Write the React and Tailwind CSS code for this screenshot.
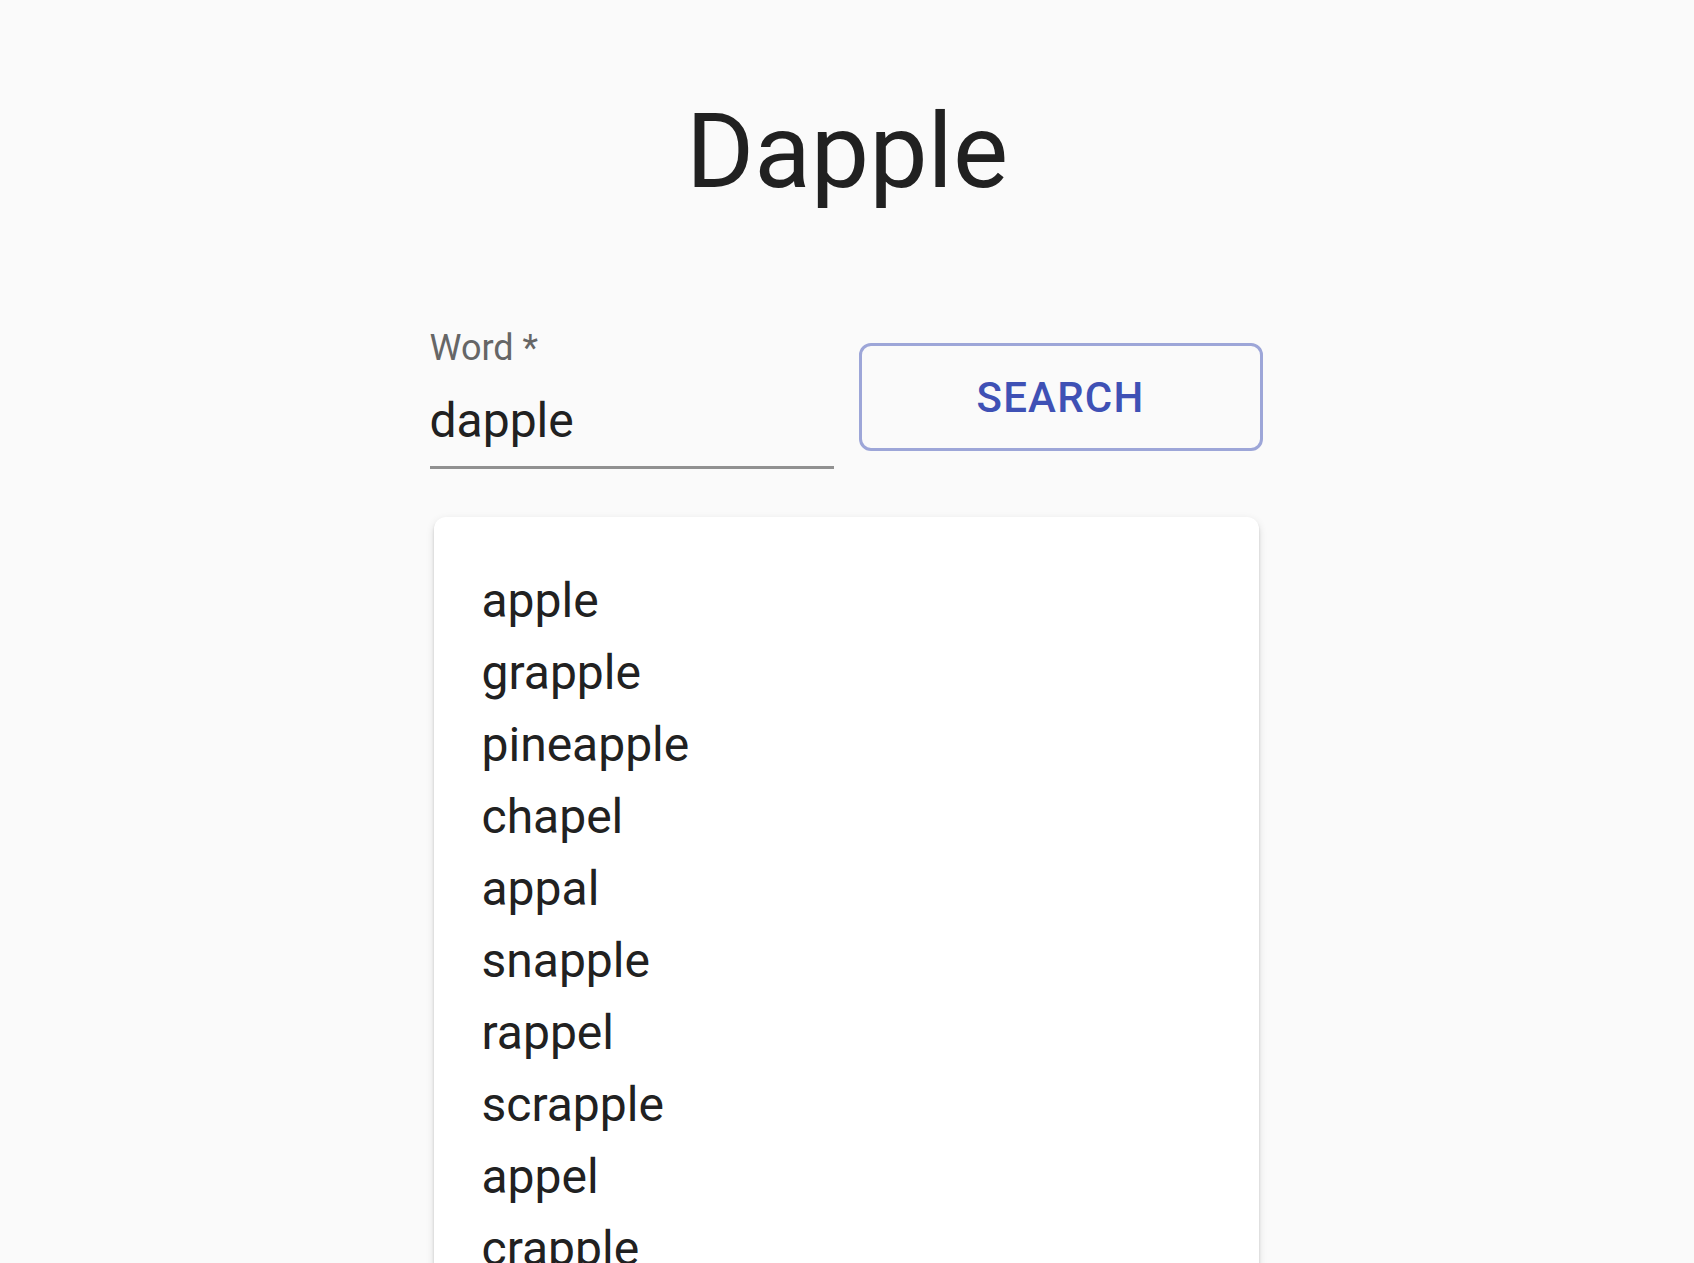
import React, { useState } from "react";

const words = [
  "apple",
  "grapple",
  "pineapple",
  "chapel",
  "appal",
  "snapple",
  "rappel",
  "scrapple",
  "appel",
  "crapple",
  "dapple",
  "chappell",
];

export default function App() {
  const [word, setWord] = useState("dapple");

  return (
    <div className="h-screen overflow-hidden bg-[#fafafa] font-['Roboto',sans-serif] text-[#212121]">
      {/* Title */}
      <h1 className="pt-[100px] text-center text-[104px] leading-[104px] font-normal">
        Dapple
      </h1>

      <div className="mx-auto mt-[126px] w-[833px] -translate-x-[1px]">
        {/* Search form */}
        <form
          onSubmit={(e) => e.preventDefault()}
          className="flex items-start gap-[25px]"
        >
          <label className="flex w-[404px] flex-col">
            <span className="text-[36px] leading-[36px] text-[#666666]">Word *</span>
            <input
              value={word}
              onChange={(e) => setWord(e.target.value)}
              className="mt-[27px] box-content h-[56px] border-b-[3px] border-[#919191] bg-transparent pb-[17px] text-[48px] leading-[56px] text-[#212121] outline-none"
            />
          </label>
          <button
            type="submit"
            className="mt-[13px] flex h-[108px] w-[404px] items-center justify-center rounded-[12px] border-[3px] border-[#9da6d8] text-[42px] font-medium uppercase tracking-[1.2px] text-[#3f51b5]"
          >
            Search
          </button>
        </form>

        {/* Results */}
        <div className="mx-[4px] mt-[48px] rounded-[12px] bg-white px-[48px] pt-[48px] pb-[48px] shadow-[0_6px_3px_-3px_rgba(0,0,0,0.2),0_3px_3px_0_rgba(0,0,0,0.14),0_3px_9px_0_rgba(0,0,0,0.12)]">
          <ul>
            {words.map((w) => (
              <li key={w} className="text-[48px] leading-[72px]">
                {w}
              </li>
            ))}
          </ul>
        </div>
      </div>
    </div>
  );
}
